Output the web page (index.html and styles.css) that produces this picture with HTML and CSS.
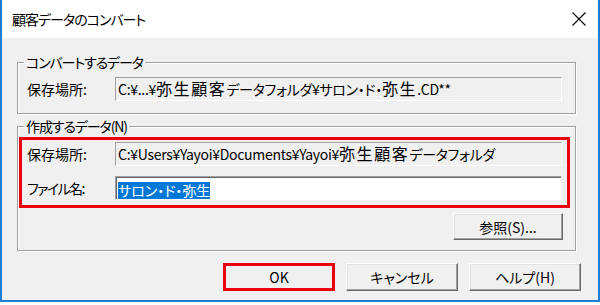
FILE: index.html
```html
<!DOCTYPE html>
<html lang="ja">
<head>
<meta charset="utf-8">
<title>顧客データのコンバート</title>
<link rel="stylesheet" href="styles.css">
</head>
<body>
<div class="window">
  <div class="titlebar">
    <span class="title">顧客データのコンバート</span>
    <span class="close"><svg width="14" height="14" viewBox="0 0 14 14"><path d="M0.5 0.5 L13.5 13.5 M13.5 0.5 L0.5 13.5" stroke="#000" stroke-width="1.1" fill="none"/></svg></span>
  </div>
  <div class="content">
    <div class="group g1">
      <div class="legend">コンバートするデータ</div>
      <div class="row first">
        <span class="label">保存場所:</span>
        <div class="field ro">C:¥...¥<span class="k">弥生顧客</span>データフォルダ¥サロン・ド・<span class="k">弥生</span>.CD**</div>
      </div>
    </div>
    <div class="group g2">
      <div class="legend">作成するデータ(N)</div>
      <div class="mark">
        <div class="row">
          <span class="label">保存場所:</span>
          <div class="field ro">C:¥Users¥Yayoi¥Documents¥Yayoi¥<span class="k">弥生顧客</span>データフォルダ</div>
        </div>
        <div class="row second">
          <span class="label narrow">ファイル名:</span>
          <div class="field edit"><span class="sel">サロン・ド・弥生</span></div>
        </div>
      </div>
      <div class="browse-row"><button class="btn browse">参照(S)...</button></div>
    </div>
    <div class="actions">
      <button class="btn ok">OK</button>
      <button class="btn">キャンセル</button>
      <button class="btn">ヘルプ(H)</button>
    </div>
  </div>
</div>
</body>
</html>
```
FILE: styles.css
```css
* { box-sizing: border-box; }
html, body { margin: 0; padding: 0; background: #fff; }
body {
  width: 600px;
  height: 305px;
  overflow: hidden;
  font-family: "Noto Sans CJK JP", sans-serif;
  font-size: 14px;
  font-feature-settings: "palt";
  color: #000;
}
.window {
  width: 600px;
  height: 302px;
  border: 2px solid #1e7fd6;
  border-top: 0;
  background: #f0f0f0;
  display: flex;
  flex-direction: column;
}
.titlebar {
  height: 38px;
  flex: none;
  background: #fff;
  display: flex;
  align-items: center;
  justify-content: space-between;
  padding: 0 12px 0 10px;
}
.title {
  font-size: 14px;
  line-height: 20px;
  letter-spacing: -1px;
}
.close { display: flex; width: 14px; height: 14px; }
.content {
  flex: 1;
  padding: 24px 0 0 15px;
}
.group {
  width: 559px;
  border: 1px solid #a0a0a0;
  box-shadow: 1px 1px 0 #fff, inset 1px 1px 0 #fff;
}
.legend {
  width: max-content;
  margin: -9px 0 0 6px;
  padding: 0 2px;
  background: #f0f0f0;
  line-height: 16px;
  height: 16px;
  letter-spacing: -1.1px;
}
.g1 { padding: 0 12px 12px 0; }
.g1 .row { padding-left: 9px; }
.row { display: flex; align-items: center; }
.row.first { margin-top: 7px; }
.label { width: 88px; flex: none; line-height: 16px; }
.label.narrow { letter-spacing: -1.6px; }
.field {
  width: 447px;
  height: 24px;
  flex: none;
  border: 1px solid;
  border-color: #a0a0a0 #fff #fff #a0a0a0;
  padding-left: 2px;
  line-height: 22px;
  white-space: nowrap;
  letter-spacing: -0.3px;
}
.k {
  font-size: 16px;
  letter-spacing: 1.6px;
  line-height: 16px;
}
.edit {
  background: #fff;
  box-shadow: inset 1px 1px 0 #696969;
  letter-spacing: 0;
}
.sel {
  background: #0078d7;
  color: #fff;
  display: inline-block;
  line-height: 17px;
  vertical-align: middle;
}
.g2 {
  margin-top: 12px;
  padding: 0 12px 10px 0;
}
.mark {
  margin: 3px 0 0 1px;
  width: 551px;
  border: 3px solid #e8000e;
  padding: 2px 5px 5px 5px;
}
.row.second { margin-top: 10px; }
.browse-row {
  margin-top: 5px;
  display: flex;
  justify-content: flex-end;
}
.btn {
  width: 112px;
  height: 28px;
  padding: 0;
  font: inherit;
  font-size: 14px;
  line-height: 16px;
  color: #000;
  background: #f0f0f0;
  border: 1px solid;
  border-color: #fff #696969 #696969 #fff;
  box-shadow: inset -1px -1px 0 #a0a0a0, inset 1px 1px 0 #e3e3e3;
}
.btn.browse { width: 110px; height: 27px; }
.btn.ok {
  border: 3px solid #e8000e;
  box-shadow: none;
}
.actions {
  margin-top: 12px;
  width: 564px;
  display: flex;
  justify-content: flex-end;
  gap: 11px;
}
```
